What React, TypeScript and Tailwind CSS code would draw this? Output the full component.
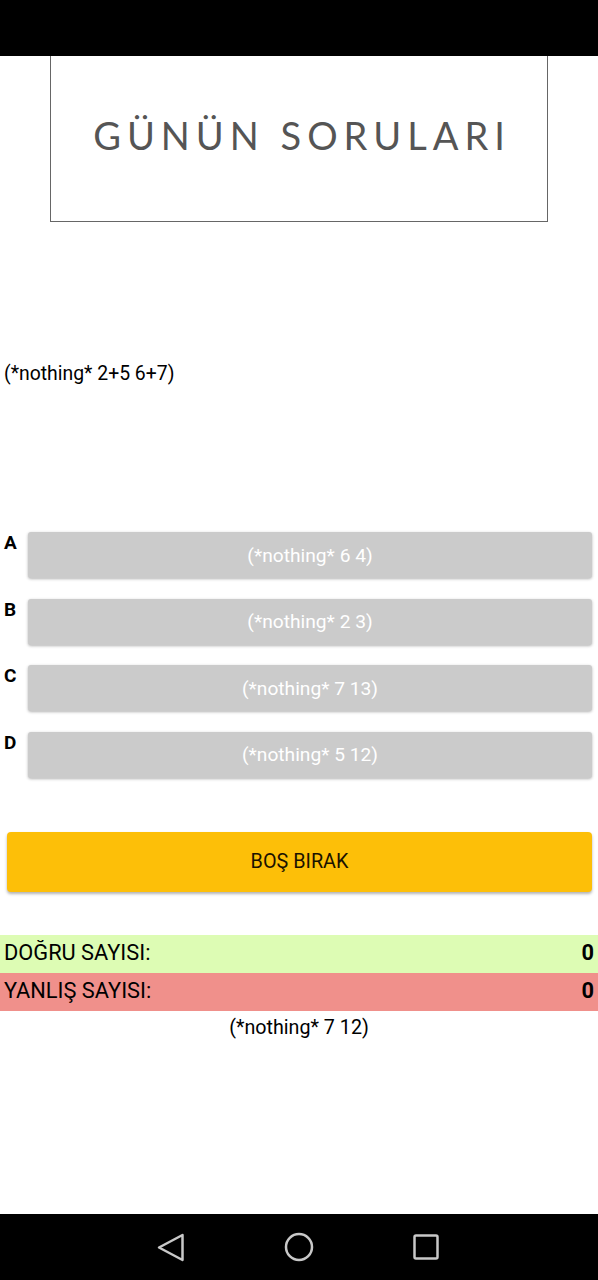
import React from "react";

const roboto = { fontFamily: "Roboto, 'Liberation Sans', sans-serif" };

export default function App() {
  const options = [
    ["A", "(*nothing* 6 4)"],
    ["B", "(*nothing* 2 3)"],
    ["C", "(*nothing* 7 13)"],
    ["D", "(*nothing* 5 12)"],
  ];
  return (
    <div className="flex min-h-[1280px] w-[598px] flex-col bg-white" style={roboto}>
      <div className="h-[56px] bg-black" />
      <div className="mx-[50px] flex h-[166px] items-center justify-center border-x border-b border-[#666]">
        <span
          className="mb-[8px] pl-[6px] text-[38px] leading-none tracking-[6px] text-[#555]"
          style={{ fontFamily: "Lato, 'Open Sans', sans-serif" }}
        >
          GÜNÜN SORULARI
        </span>
      </div>
      <div className="mt-[140px] pl-[4px] text-[19.4px] leading-[24px] text-black">(*nothing* 2+5 6+7)</div>
      <div className="mt-[146px] flex flex-col gap-[20.5px]">
        {options.map(([l, t]) => (
          <div key={l} className="flex">
            <div className="w-[28px] pl-[4px] pt-[1px] text-[19px] font-bold leading-[20px] text-black">{l}</div>
            <div className="mr-[6px] flex h-[46px] flex-1 items-center justify-center rounded-[3px] bg-[#cbcbcb] pt-[2px] text-[19.2px] text-white shadow-[0_1px_3px_rgba(0,0,0,0.3)]">
              {t}
            </div>
          </div>
        ))}
      </div>
      <div className="ml-[7px] mr-[6px] mt-[54px] flex h-[60px] items-center justify-center rounded-[4px] bg-[#fdbf08] text-[19.8px] text-[#1a1200] shadow-[0_2px_3px_rgba(0,0,0,0.3)]">
        BOŞ BIRAK
      </div>
      <div className="mt-[43px] flex h-[38px] items-center justify-between bg-[#ddfcb4] px-[4px] text-[21.8px] text-black">
        <span>DOĞRU SAYISI:</span>
        <span className="font-bold">0</span>
      </div>
      <div className="flex h-[38px] items-center justify-between bg-[#f0908b] px-[4px] text-[21.8px] text-black">
        <span>YANLIŞ SAYISI:</span>
        <span className="font-bold">0</span>
      </div>
      <div className="mt-[5px] text-center text-[19.7px] leading-[24px] text-black">(*nothing* 7 12)</div>
      <div className="mt-auto flex h-[66px] items-center justify-center bg-black">
        <svg width="598" height="66" viewBox="0 0 598 66">
          <path d="M182.5 21 L159 33.5 L182.5 46 Z" fill="none" stroke="#c8c8c8" strokeWidth="2.5" strokeLinejoin="round" />
          <circle cx="299" cy="33" r="13" fill="none" stroke="#c8c8c8" strokeWidth="2.5" />
          <rect x="414.5" y="21.5" width="23" height="23" rx="1.5" fill="none" stroke="#c8c8c8" strokeWidth="2.5" />
        </svg>
      </div>
    </div>
  );
}
